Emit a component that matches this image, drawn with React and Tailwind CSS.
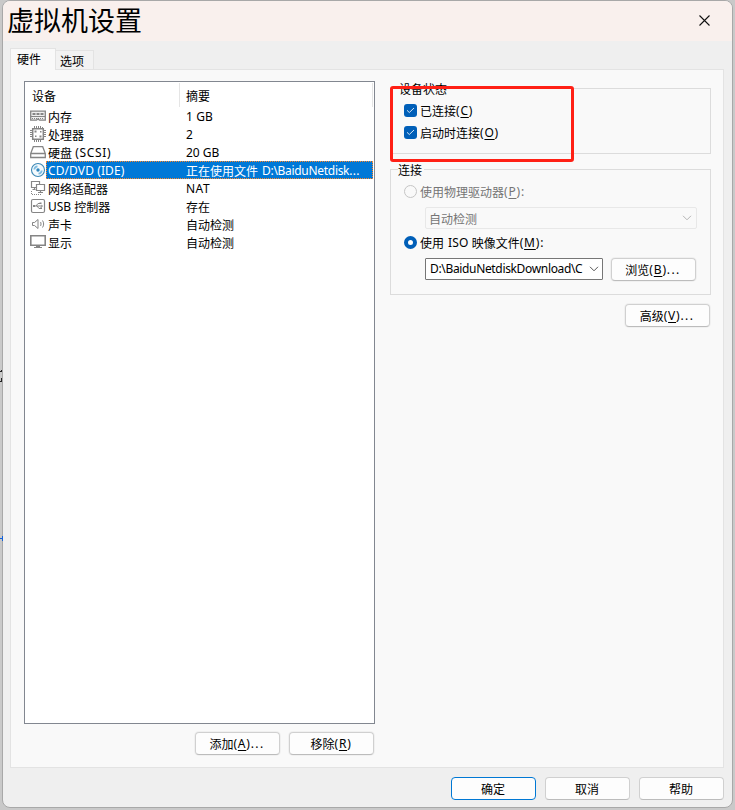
import React from "react";

const svgProps = {
  width: 16,
  height: 16,
  viewBox: "0 0 16 16",
  fill: "none",
  stroke: "#858585",
  className: "relative top-px shrink-0",
};

const MemoryIcon = () => (
  <svg {...svgProps}>
    <path d="M.7 3.200h14.600v9H9.500l-1-1h-1l-1 1H.7z" strokeWidth="1.300" fill="#efefef" />
    <path d="M2.500 5h3v2h-3zM6.500 5h3v2h-3zM10.500 5h3v2h-3z" fill="#858585" stroke="none" />
    <path d="M1 8.500h14" />
    <path d="M2 10.500h12" strokeDasharray="1 1" />
  </svg>
);
const CpuIcon = () => (
  <svg {...svgProps}>
    <path d="M2.700 2.700h10.600v10.600H2.700z" strokeWidth="1.500" />
    <path d="M4.500 0v2M6.500 0v2M8.500 0v2M10.500 0v2M12.500 1v1M4.500 14v2M6.500 14v2M8.500 14v2M10.500 14v2M0 4.500h2M0 6.500h2M0 8.500h2M0 10.500h2M14 4.500h2M14 6.500h2M14 8.500h2M14 10.500h2" />
    <path d="M4.500 4.500h2v2h-2zM10 5h1.500v1.500H10zM5 9.500h1.500V11H5zM9.500 9.500h2v2h-2z" fill="#858585" stroke="none" />
  </svg>
);
const DiskIcon = () => (
  <svg {...svgProps}>
    <path d="M3.300 2.700h9.400l2.600 6.800v4H.7v-4zM.7 9.500h14.600" strokeWidth="1.300" />
  </svg>
);
const DiscIcon = () => (
  <svg {...svgProps} stroke="#3c88b5">
    <circle cx="8" cy="8" r="6.500" fill="#f4fafd" strokeWidth="1.100" />
    <circle cx="8" cy="8" r="1.700" fill="#2f86bd" stroke="none" />
    <path d="M4.300 7.500a3.500 3.500 0 0 1 3.200-3.200M11.700 8.500a3.500 3.500 0 0 1-3.200 3.200" stroke="#7dbbe0" strokeWidth="1.800" />
  </svg>
);
const NetworkIcon = () => (
  <svg {...svgProps}>
    <path d="M6 7.500H1.500v-6h8V4" strokeWidth="1.200" />
    <path d="M6.500 4.500h8v6h-8zM10.500 10.500v2M8 12.500h5M4.500 7v2M2.500 9.500h3" strokeWidth="1.200" />
    <path d="M1.500 11v3.500H11" strokeDasharray="1 1" />
  </svg>
);
const UsbIcon = () => (
  <svg {...svgProps}>
    <rect x="1.500" y="1.500" width="13" height="13" rx="1.500" strokeWidth="1.200" />
    <path d="M4 8h8M6 8l2-2.500h2M7 8l2 2.500h2" />
    <path d="M3 7h2v2H3zM9.500 4.500h2V6h-2zM10 9.500h2V11h-2zM11.500 6.500 13 8l-1.500 1.500z" fill="#858585" stroke="none" />
  </svg>
);
const SoundIcon = () => (
  <svg {...svgProps}>
    <path d="M2.500 6.500h2l3.500-3v9l-3.500-3h-2zM10.500 6c.7 1 .7 3 0 4M12.500 4.500c1.500 2 1.500 5 0 7" />
  </svg>
);
const DisplayIcon = () => (
  <svg {...svgProps}>
    <path d="M.8 1.800h14.400v9.400H.8z" strokeWidth="1.600" />
    <path d="M4 13.500h8M6 12.500h4" />
  </svg>
);

const En = ({ children, className = "" }) => (
  <span className={"relative -top-px " + className}>{children}</span>
);
const Key = ({ k, after = "" }) => (
  <En className="tracking-[0.8px]">
    (<span className="underline underline-offset-2">{k}</span>)
    {after && <span className={after === "..." ? "tracking-[1.4px]" : "tracking-normal"}>{after}</span>}
  </En>
);

const rows = [
  [MemoryIcon, "内存", <En className="tracking-[0.1px]">1 GB</En>],
  [CpuIcon, "处理器", <En>2</En>],
  [DiskIcon, <>硬盘 <En className="tracking-[0.7px]">(SCSI)</En></>, <En>20 GB</En>],
  [DiscIcon, <En className="tracking-[0.1px]">CD/DVD (IDE)</En>, <>正在使用文件<En className="ml-[4px] tracking-[-0.3px]">D:\BaiduNetdisk<span className="tracking-[0.3px]">...</span></En></>],
  [NetworkIcon, "网络适配器", <En className="tracking-[0.5px]">NAT</En>],
  [UsbIcon, <><En>USB</En> 控制器</>, "存在"],
  [SoundIcon, "声卡", "自动检测"],
  [DisplayIcon, "显示", "自动检测"],
];

const Button = ({ children, primary, ring }) => (
  <button
    className={
      "flex h-[23px] w-[85px] items-center justify-center rounded-[4px] border bg-[#fdfdfd] pt-[2px] pr-px whitespace-nowrap " +
      (primary ? "border-[#0078d4]" : "border-[#d0d0d0] border-b-[#bcbcbc]") +
      (ring ? " shadow-[0_0_0_1px_#f0f0f0]" : "")
    }
  >
    {children}
  </button>
);

const Chevron = ({ color }) => (
  <svg width="10" height="6" viewBox="0 0 10 6" fill="none" stroke={color}>
    <path d="M1 .8l4 4 4-4" />
  </svg>
);

const Check = ({ children }) => (
  <label className="flex h-[22px] items-center">
    <span className="mr-[3px] flex size-[13px] items-center justify-center rounded-[3px] bg-[#005fb8]">
      <svg width="9" height="7" viewBox="0 0 9 7" fill="none" stroke="#d5e6f5">
        <path d="M1 3.300l2.300 2.200L8 1" />
      </svg>
    </span>
    <span className="pt-[4px]">{children}</span>
  </label>
);

export default function App() {
  return (
    <div className="relative h-[810px] w-[735px] overflow-hidden bg-[#c9c9c9] pl-[2px] font-['Noto_Sans','Noto_Sans_CJK_SC',sans-serif] text-[12px] leading-[18px] text-black">
      <div className="flex h-[808px] w-[731px] flex-col overflow-hidden rounded-[8px] border border-[#a8a8a8] bg-[#efefef]">
        <header className="flex h-[40px] shrink-0 items-center justify-between bg-[#f9f0ed] pr-[22px] pl-[4px]">
          <h1 className="text-[27px] leading-[40px]">虚拟机设置</h1>
          <svg width="11" height="11" viewBox="0 0 11 11" stroke="#111" fill="none" className="-mt-px">
            <path d="M.5.5l10 10M10.500.5l-10 10" strokeWidth="1.100" />
          </svg>
        </header>

        <nav className="relative z-10 mt-[7px] ml-[7px] flex h-[22px] shrink-0 items-end">
          <div className="h-[22px] w-[46px] border border-b-0 border-[#e3e3e3] bg-[#f9f9f9] pt-[2px] pl-[6px]">硬件</div>
          <div className="h-[20px] w-[38px] border border-l-0 border-[#e3e3e3] bg-[#f2f2f2] pt-[2px] pl-[4px] leading-[17px]">选项</div>
        </nav>

        <main className="-mt-px ml-[7px] flex h-[699px] w-[714px] shrink-0 border border-[#e3e3e3] bg-[#f9f9f9] pt-[11px] pl-[13px]">
          <section className="w-[351px]">
            <div className="h-[643px] border border-[#828790] bg-white">
              <div className="flex h-[25px] pt-px">
                <div className="w-[155px] border-r border-[#e5e5e5] pt-[5px] pl-[7px]">设备</div>
                <div className="mr-px flex-1 border-r border-[#e5e5e5] pt-[5px] pl-[6px]">摘要</div>
              </div>
              {rows.map(([Icon, name, summary], i) => (
                <div key={i} className="flex h-[18px] pr-px pl-[5px] whitespace-pre">
                  <Icon />
                  <div
                    className={
                      "flex flex-1 border border-dotted leading-[20px] " +
                      (i === 3 ? "border-[#ff8728] bg-[#0078d7] text-white" : "border-transparent")
                    }
                  >
                    <div className="w-[139px] pl-px">{name}</div>
                    <div>{summary}</div>
                  </div>
                </div>
              ))}
            </div>
            <div className="mt-[8px] flex justify-end gap-[9px] pr-px">
              <Button ring><span>添加<Key k="A" after="..." /></span></Button>
              <Button ring><span>移除<Key k="R" /></span></Button>
            </div>
          </section>

          <section className="ml-[15px] w-[321px] pt-[7px]">
            <div className="h-[66px] border border-[#dcdcdc] px-[8px]">
              <div className="-mt-[8px] flex h-[18px]"><span className="bg-[#f9f9f9]">设备状态</span></div>
              <div className="pl-[5px]">
                <Check>已连接<Key k="C" /></Check>
                <Check>启动时连接<Key k="O" /></Check>
              </div>
            </div>

            <div className="mt-[15px] h-[126px] border border-[#dcdcdc] px-[7px]">
              <div className="-mt-[8px] flex h-[18px]"><span className="bg-[#f9f9f9] pr-[2px]">连接</span></div>
              <div className="pl-[6px]">
                <label className="mt-[2px] flex h-[18px] items-center text-[#757575]">
                  <span className="mr-[3px] size-[13px] rounded-full border border-[#c5c5c5]" />
                  <span className="pt-[3px]">使用物理驱动器<Key k="P" after=":" /></span>
                </label>
                <div className="mt-[7px] ml-[21px] flex h-[22px] w-[272px] items-center justify-between rounded-[2px] border border-[#e8e8e8] pr-[4px] pl-[3px] text-[#757575]">
                  <span className="pt-[4px]">自动检测</span>
                  <Chevron color="#b5b5b5" />
                </div>
                <label className="mt-[4px] flex h-[18px] items-center">
                  <span className="mr-[3px] size-[13px] rounded-full border-4 border-[#005fb8] bg-white" />
                  <span className="pt-[3px]">使用<En className="mr-[3px] ml-[4px] tracking-[0.2px]">ISO</En>映像文件<Key k="M" after=":" /></span>
                </label>
                <div className="mt-[7px] ml-[21px] flex gap-[8px]">
                  <div className="flex h-[22px] w-[178px] items-center justify-between rounded-[1px] border border-[#767676] bg-white pr-[3px] pl-[4px]">
                    <span className="tracking-[-0.34px] whitespace-nowrap">D:\BaiduNetdiskDownload\C</span>
                    <Chevron color="#555555" />
                  </div>
                  <Button ring><span>浏览<Key k="B" after="..." /></span></Button>
                </div>
              </div>
            </div>
            <div className="mt-[9px] flex justify-end pr-px">
              <Button ring><span>高级<Key k="V" after="..." /></span></Button>
            </div>
          </section>
        </main>

        <footer className="mt-[9px] mr-[8px] flex justify-end gap-[9px]">
          <Button primary>确定</Button>
          <Button>取消</Button>
          <Button>帮助</Button>
        </footer>
      </div>

      <div className="absolute top-[86px] left-[390px] h-[76px] w-[184px] rounded-[3px] border-[3px] border-[#ff2015]" />
      <svg className="absolute top-[368px] left-0" width="3" height="176" viewBox="0 0 3 176" fill="none">
        <path d="M0 3.500h2M1.500 2v2M0 13.500h2M1.500 10v3" stroke="#222" />
        <path d="M0 170.500h3M2.500 168v5" stroke="#1260d8" />
      </svg>
    </div>
  );
}
